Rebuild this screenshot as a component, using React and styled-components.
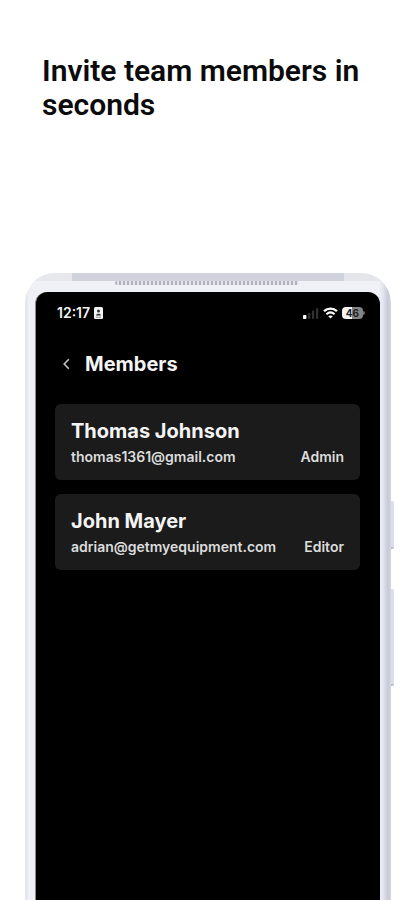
import React from "react";
import styled, { createGlobalStyle } from "styled-components";

const members = [
  { name: "Thomas Johnson", email: "thomas1361@gmail.com", role: "Admin" },
  { name: "John Mayer", email: "adrian@getmyequipment.com", role: "Editor" },
];

const App = () => {
  return (
    <>
      <GlobalStyle />
      <Page>
        <Title>Invite team members in seconds</Title>
        <Phone>
          <TopEdge />
          <Speaker />
          <SideButton $top={228} $height={48} />
          <SideButton $top={316} $height={97} />
          <Screen>
            <StatusBar>
              <StatusGroup>
                <Time>12:17</Time>
                <CardIcon />
              </StatusGroup>
              <StatusGroup>
                <SignalIcon />
                <WifiIcon />
                <Battery>
                  <BatteryLevel>46</BatteryLevel>
                </Battery>
              </StatusGroup>
            </StatusBar>

            <Header>
              <BackButton type="button" aria-label="Back">
                <svg width="8" height="12" viewBox="0 0 8 12" fill="none">
                  <path d="M6.8 1.2 2.2 6l4.6 4.8" stroke="#c4c4c4" strokeWidth="1.6" />
                </svg>
              </BackButton>
              <HeaderTitle>Members</HeaderTitle>
            </Header>

            <MemberList>
              {members.map((member) => (
                <MemberCard key={member.email}>
                  <MemberName>{member.name}</MemberName>
                  <MemberInfo>
                    <span>{member.email}</span>
                    <span>{member.role}</span>
                  </MemberInfo>
                </MemberCard>
              ))}
            </MemberList>
          </Screen>
        </Phone>
      </Page>
    </>
  );
};

export default App;

const CardIcon = () => (
  <svg width="9" height="12" viewBox="0 0 9 12">
    <rect width="9" height="12" rx="1.5" fill="#f2f2f2" />
    <circle cx="4.5" cy="4" r="1.5" fill="#333" />
    <path d="M2 8.6c0-2.6 5-2.6 5 0z" fill="#333" />
    <path d="M2 10.2h5" stroke="#777" strokeWidth="0.8" />
  </svg>
);

const SignalIcon = () => (
  <svg width="16" height="12" viewBox="0 0 16 12">
    <rect x="0" y="8" width="3.4" height="4" rx="0.8" fill="#fff" />
    <rect x="5" y="6" width="2.2" height="6" rx="0.8" fill="#303030" />
    <rect x="9" y="3.5" width="2.2" height="8.5" rx="0.8" fill="#303030" />
    <rect x="13" y="1" width="2.2" height="11" rx="0.8" fill="#303030" />
  </svg>
);

const WifiIcon = () => (
  <svg width="15" height="12" viewBox="0 0 15 12" fill="none">
    <path d="M1 4.2c3.8-3.5 9.2-3.5 13 0" stroke="#fff" strokeWidth="2.4" />
    <path d="M3.4 7.2c2.5-2.2 5.7-2.2 8.2 0" stroke="#fff" strokeWidth="2" />
    <path d="M7.5 11.6 5.2 9.2c1.4-1.1 3.2-1.1 4.6 0z" fill="#fff" />
  </svg>
);

const GlobalStyle = createGlobalStyle`
  * {
    box-sizing: border-box;
  }

  body {
    margin: 0;
    background: #fff;
    font-family: "Inter", "Liberation Sans", sans-serif;
  }
`;

const Page = styled.main`
  display: flex;
  flex-direction: column;
  min-height: 100vh;
  overflow: hidden;
`;

const Title = styled.h1`
  margin: 0;
  padding: 54px 42px 150px;
  color: #0b0b0b;
  font-family: "Roboto", sans-serif;
  font-size: 30px;
  font-weight: 600;
  line-height: 34px;
`;

const Phone = styled.section`
  position: relative;
  flex: 1;
  display: flex;
  flex-direction: column;
  margin: 1px 24px 0 25px;
  padding: 19px 11px 0 10px;
  border-radius: 30px 30px 0 0;
  background: linear-gradient(
    to right,
    #e4e6ea 0,
    #e4e6ea 2px,
    #eff1f6 3px,
    #eff1f6 calc(100% - 12px),
    #e3e5ee calc(100% - 8px),
    #c6cad7 calc(100% - 3px),
    #d5d8e2 100%
  );
`;

// same curve as the phone, only the top 8px is painted
const TopEdge = styled.div`
  position: absolute;
  top: 0;
  left: 0;
  right: 0;
  height: 30px;
  border-radius: 30px 30px 0 0;
  background: linear-gradient(
      to right,
      #e6e8ec 47px,
      #d1d3dc 47px,
      #d1d3dc calc(100% - 47px),
      #e4e6ec calc(100% - 47px)
    )
    top / 100% 8px no-repeat;
`;

const Speaker = styled.div`
  position: absolute;
  top: 8px;
  left: 90px;
  right: 92px;
  height: 4px;
  border-radius: 2px;
  background: repeating-linear-gradient(to right, #b0b2bb 0 2px, #e3e5eb 2px 4px);
`;

const SideButton = styled.div`
  position: absolute;
  top: ${({ $top }) => $top}px;
  right: -3px;
  width: 3px;
  height: ${({ $height }) => $height}px;
  border-radius: 0 2px 2px 0;
  border-bottom: 2px solid #b9bcc8;
  background: #dcdee7;
`;

const Screen = styled.div`
  flex: 1;
  padding: 0 20px 0 19px;
  border-left: 1px solid #8b8c91;
  border-radius: 12px 12px 0 0;
  background: #000;
  color: #f4f4f4;
`;

const StatusBar = styled.div`
  display: flex;
  align-items: center;
  justify-content: space-between;
  height: 42px;
  margin-right: -5px;
  padding-left: 2px;
`;

const StatusGroup = styled.div`
  display: flex;
  align-items: center;
  gap: 4px;
`;

const Time = styled.span`
  font-size: 14px;
  font-weight: 600;
  line-height: 16px;
`;

const Battery = styled.div`
  display: flex;
  align-items: center;

  &::after {
    content: "";
    width: 2px;
    height: 4px;
    border-radius: 0 2px 2px 0;
    background: #6d6d6d;
  }
`;

const BatteryLevel = styled.span`
  width: 21px;
  border-radius: 4px;
  background: linear-gradient(to right, #f4f4f4 46%, #858585 46%);
  color: #222;
  font-size: 10px;
  font-weight: 700;
  line-height: 12px;
  text-align: center;
`;

const Header = styled.header`
  display: flex;
  align-items: center;
  height: 60px;
`;

const BackButton = styled.button`
  display: flex;
  align-items: center;
  justify-content: center;
  width: 22px;
  height: 24px;
  padding: 0;
  border: 0;
  background: none;
`;

const HeaderTitle = styled.h2`
  margin: 0 0 0 8px;
  font-size: 20px;
  font-weight: 700;
  line-height: 24px;
`;

const MemberList = styled.ul`
  display: flex;
  flex-direction: column;
  gap: 14px;
  margin: 0;
  padding: 10px 0;
  list-style: none;
`;

const MemberCard = styled.li`
  padding: 15px 16px 14px;
  border-radius: 6px;
  background: #1b1b1b;
`;

const MemberName = styled.h3`
  margin: 0;
  font-size: 20px;
  font-weight: 700;
  line-height: 24px;
`;

const MemberInfo = styled.div`
  display: flex;
  justify-content: space-between;
  margin-top: 5px;
  color: #dcdcdc;
  font-size: 14px;
  font-weight: 600;
  line-height: 18px;
`;
